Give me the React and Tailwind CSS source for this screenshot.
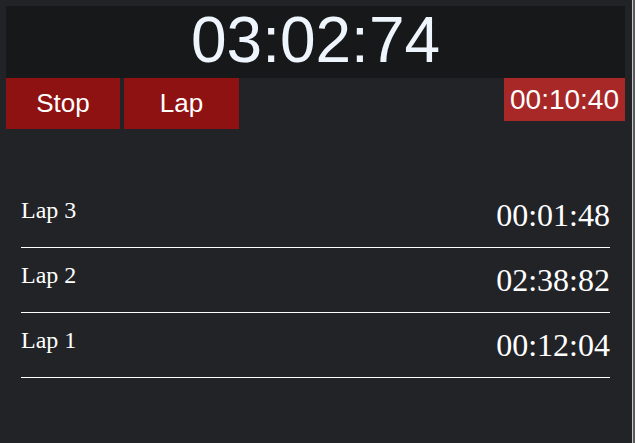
import React from "react";

const laps = [
  { name: "Lap 3", time: "00:01:48" },
  { name: "Lap 2", time: "02:38:82" },
  { name: "Lap 1", time: "00:12:04" },
];

export default function App() {
  return (
    <div className="w-[635px] h-[443px] bg-[#222327] flex overflow-hidden">
      <div className="w-[632px] h-full">
        <div className="pt-[6px] pl-[6px] w-[625px]">
          <div className="h-[72px] bg-[#17181a] flex items-center justify-center">
            <span
              className="text-[64px] leading-none text-[#eef5fc] mt-[-4px]"
              style={{ fontFamily: '"Liberation Sans", Arial, sans-serif' }}
            >
              03:02:74
            </span>
          </div>
          <div
            className="flex items-start"
            style={{ fontFamily: '"Liberation Sans", Arial, sans-serif' }}
          >
            <button className="w-[114px] h-[51px] bg-[#8f1212] text-white text-[26px] flex items-center justify-center">
              Stop
            </button>
            <button className="ml-[4px] w-[115px] h-[51px] bg-[#8f1212] text-white text-[26px] flex items-center justify-center">
              Lap
            </button>
            <div className="ml-auto w-[121px] h-[43px] bg-[#a82828] text-white text-[28px] flex items-center justify-center">
              00:10:40
            </div>
          </div>
        </div>
        <div
          className="mt-[54px] ml-[21px] w-[589px]"
          style={{ fontFamily: '"Liberation Serif", "Times New Roman", serif' }}
        >
          {laps.map((l) => (
            <div
              key={l.name}
              className="h-[65px] pt-[14px] border-b border-white flex justify-between items-start text-white"
            >
              <span className="text-[24px] leading-[normal]">{l.name}</span>
              <span className="text-[32px] leading-[normal]">{l.time}</span>
            </div>
          ))}
        </div>
      </div>
      <div className="w-[1px] h-full bg-[#c8c8c8]"></div>
      <div className="w-[2px] h-full bg-[#5a5a5a]"></div>
    </div>
  );
}
